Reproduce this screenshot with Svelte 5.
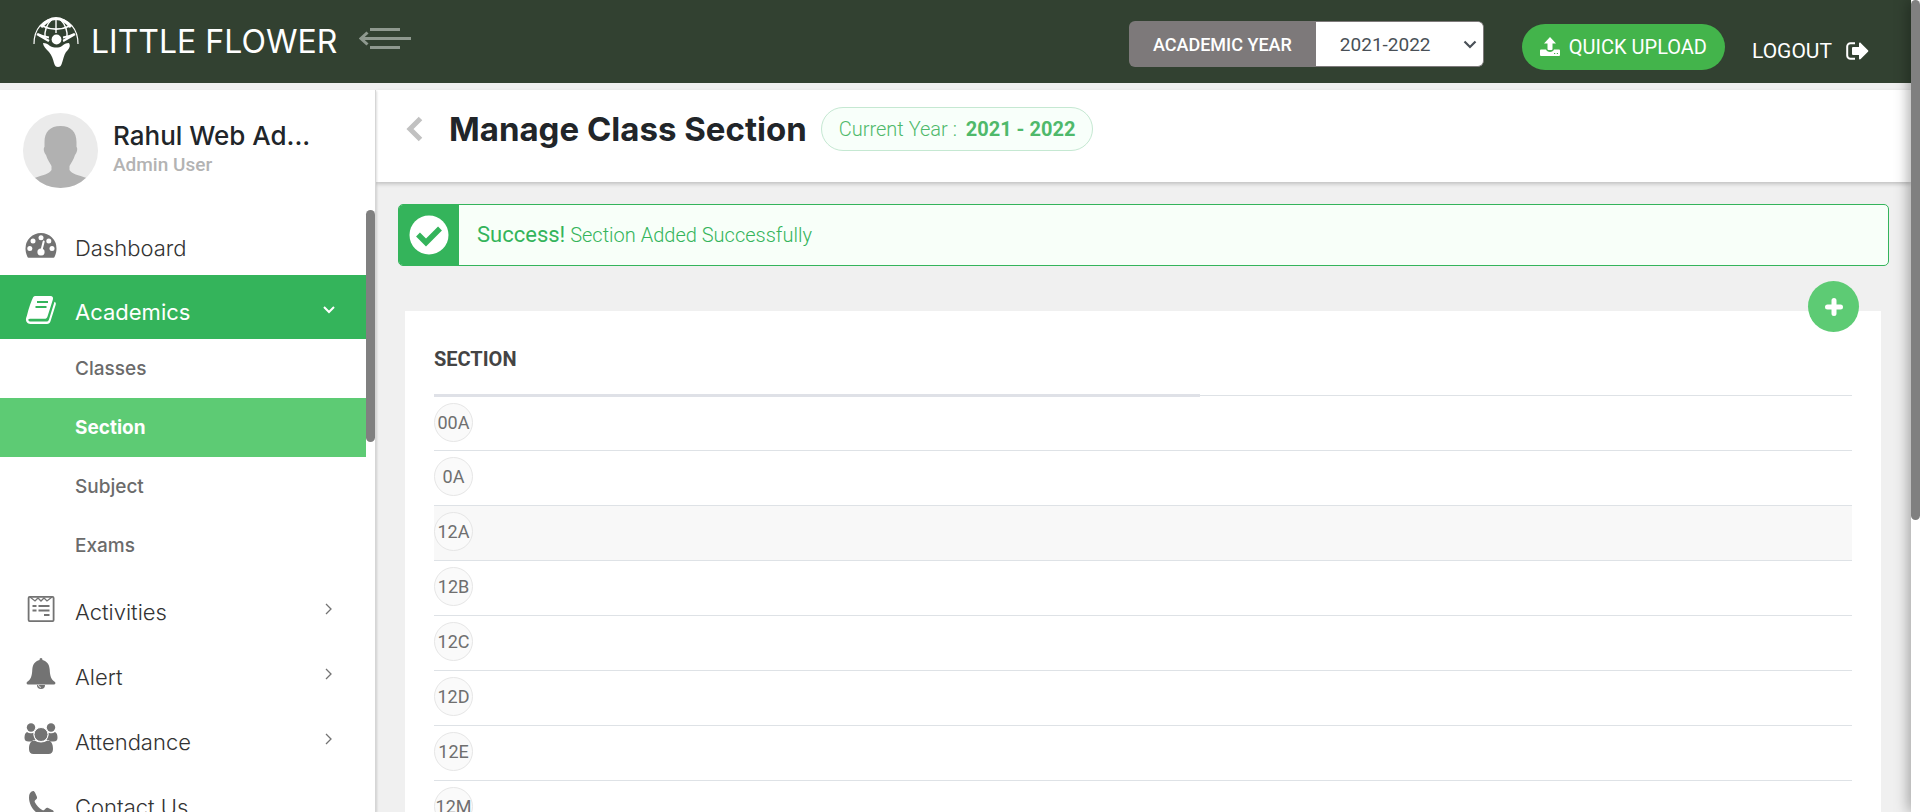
<script>
  const sections = ['00A', '0A', '12A', '12B', '12C', '12D', '12E', '12M'];
  const hovered = '12A';
  const academics = ['Classes', 'Section', 'Subject', 'Exams'];
  let year = $state('2021-2022');
</script>

{#snippet angle()}
  <svg class="angle" width="8" height="12" viewBox="0 0 8 12" aria-hidden="true">
    <path d="M1 1l5 5-5 5" fill="none" stroke="currentColor" stroke-width="1.3" />
  </svg>
{/snippet}

<div class="app">
  <div class="page">
    <header class="topbar">
      <a class="brand" href="#home">
        <svg width="46" height="50" viewBox="0 0 46 50" aria-hidden="true">
          <g fill="none" stroke="#fff">
            <path d="M1 27C1 12 10 1.500 23 1.500S45 12 45 27" stroke-width="1.200" />
            <path d="M8 10C14 3 19 1.500 23 1.500S32 3 38 10" stroke-width="3" />
            <path d="M9 9c9 4 19 4 28 0M5 17c4 2 7 3 11 3.500M41 17c-4 2-7 3-11 3.500" stroke-width="1.800" />
            <path d="M23 2v14M19 2c-5 5-8 12-7 20M27 2c5 5 8 12 7 20" stroke-width="1.400" />
            <path d="M4 17l12 7M42 17l-12 7" stroke-width="2.500" />
          </g>
          <circle cx="23.500" cy="22.500" r="6.500" fill="#324131" />
          <circle cx="23.500" cy="22.500" r="4.900" fill="#fff" />
          <path d="M10 26c3 0 5 1 7 3 4 2 9 2 12 0 2-2 4-3 7-3 2 3 0 6-3 9-2 3-3 8-4 11-1 3-2 4-4 4s-3-1-4-4c-1-4-2-7-5-11-3-3-6-6-6-9z" fill="#fff" />
        </svg>
        <span>LITTLE FLOWER</span>
      </a>
      <button class="toggle" aria-label="Toggle menu">
        <svg width="52" height="22" viewBox="0 0 52 22" aria-hidden="true">
          <path d="M11 1.500h30M2 10.500h50M11 19.500h30" stroke="currentColor" stroke-width="3" />
          <path d="M8.500 4.500L2 10.500l6.500 6" fill="none" stroke="currentColor" stroke-width="3" />
        </svg>
      </button>
      <div class="year">
        <label for="year">ACADEMIC YEAR</label>
        <div class="pick">
          <select id="year" bind:value={year}>
            <option>2021-2022</option>
            <option>2020-2021</option>
          </select>
          <svg width="14" height="9" viewBox="0 0 14 9" aria-hidden="true">
            <path d="M1.500 1.500L7 7l5.500-5.500" fill="none" stroke="#495057" stroke-width="2.200" />
          </svg>
        </div>
      </div>
      <button class="upload">
        <svg width="20" height="19" viewBox="0 0 20 19" aria-hidden="true">
          <path fill="#fff" fill-rule="evenodd" d="M10 0l6 6.500h-3.500V12a1 1 0 0 1-1 1h-3a1 1 0 0 1-1-1V6.500H4zM1 12.500h5c.6 1.600 2 2.500 4 2.500s3.400-.9 4-2.500h5a1 1 0 0 1 1 1V18a1 1 0 0 1-1 1H1a1 1 0 0 1-1-1v-4.500a1 1 0 0 1 1-1zM14 16v1h1.200v-1zm2.800 0v1H18v-1z" />
        </svg>
        QUICK UPLOAD
      </button>
      <a class="logout" href="#logout">
        LOGOUT
        <svg width="23" height="18" viewBox="0 0 23 18" aria-hidden="true">
          <path d="M9 1.200H4.500A3.300 3.300 0 0 0 1.200 4.500v9a3.300 3.300 0 0 0 3.300 3.300H9" fill="none" stroke="#fff" stroke-width="2" />
          <path d="M7 5h6V1.500c0-1 1-1.300 1.700-.6L22 8.200a1 1 0 0 1 0 1.500l-7.300 7.400c-.7.700-1.700.4-1.700-.6V13H7a1 1 0 0 1-1-1V6a1 1 0 0 1 1-1z" fill="#fff" />
        </svg>
      </a>
    </header>

    <div class="body">
      <aside>
        <div class="profile">
          <svg width="75" height="75" viewBox="0 0 75 75" aria-hidden="true">
            <clipPath id="face"><circle cx="37.500" cy="37.500" r="37.500" /></clipPath>
            <g clip-path="url(#face)">
              <path d="M0 0h75v75H0z" fill="#ebebeb" />
              <path d="M37.500 13C27 13 21.500 19 21.500 29v5c-1.500 1-.5 6 1.500 8 1.500 5 4 8 5.500 11v4c-2 4-9 5-17 8v10h52V65c-8-3-15-4-17-8v-4c1.500-3 4-6 5.500-11 2-2 3-7 1.500-8v-5c0-10-5.500-16-16-16z" fill="#b1b1b1" />
            </g>
          </svg>
          <div>
            <strong>Rahul Web Ad...</strong>
            <small>Admin User</small>
          </div>
        </div>
        <div class="scroll">
          <nav>
            <a class="item" href="#dashboard">
              <svg width="32" height="26" viewBox="0 0 32 26" aria-hidden="true">
                <path d="M16 0a15.500 15.500 0 0 0-15.500 15.500c0 3.200.9 6 2 8.500.2.500.5.700 1 .700h25c.5 0 .8-.2 1-.7 1.200-2.500 2-5.300 2-8.500A15.500 15.500 0 0 0 16 0z" fill="currentColor" />
                <g fill="#fff">
                  <circle cx="4.800" cy="15.500" r="2.500" /><circle cx="8" cy="8" r="2.500" /><circle cx="16" cy="4.800" r="2.500" />
                  <circle cx="23.800" cy="8" r="2.500" /><circle cx="27" cy="15.500" r="2.500" /><circle cx="16" cy="19" r="3.600" />
                </g>
                <path d="M16.300 18l2.400-9.500" stroke="#fff" stroke-width="2" stroke-linecap="round" />
              </svg>
              <span>Dashboard</span>
            </a>
            <a class="item open" href="#academics">
              <svg width="32" height="28" viewBox="0 0 32 28" aria-hidden="true">
                <path d="M11 0h14.500c2 0 3 1.500 2.400 3.500L22.500 20.500c-.5 1.600-1.500 2.300-3 2.300H5c-1.500 0-2 .8-1.500 1.700.4.800 1 1 2 1h16c1.200 0 2-.7 2.400-1.800l5.600-18c1.300.6 1.600 1.700 1.200 3l-5.200 16.500c-.6 1.800-1.700 2.700-3.500 2.700H5.500C2.500 28 .5 25.500 1 22.500 2 20 3.500 13 5 9c1-3 2-5 3-7.500C8.700.3 9.600 0 11 0z" fill="#fff" />
                <path d="M12 6h11M10.500 11h11" stroke="#34b45b" stroke-width="1.800" />
              </svg>
              <span>Academics</span>
              <svg class="angle" width="12" height="8" viewBox="0 0 12 8" aria-hidden="true">
                <path d="M1 1l5 5 5-5" fill="none" stroke="#fff" stroke-width="2" />
              </svg>
            </a>
            <div class="sub">
              {#each academics as entry}
                <a href="#{entry}" class:active={entry === 'Section'}>{entry}</a>
              {/each}
            </div>
            <a class="item" href="#activities">
              <svg width="32" height="26" viewBox="0 0 32 26" aria-hidden="true">
                <g fill="none" stroke="currentColor">
                  <rect x="3.600" y=".9" width="25" height="24.200" rx="1" stroke-width="1.800" />
                  <path d="M5 1l5 4 3-3 3 3 3-3 3 3 5-4" stroke-width="1.300" />
                  <path d="M7.500 10h4M13.500 10h11M7.500 14.500h4M13.500 14.500h11M19 19h5.500" stroke-width="2" />
                </g>
              </svg>
              <span>Activities</span>
              {@render angle()}
            </a>
            <a class="item" href="#alert">
              <svg width="32" height="31" viewBox="0 0 32 31" aria-hidden="true">
                <path d="M16 0c1 0 1.600.8 1.400 2 4.500 1 7 4.500 7.300 9.500.3 7 1.500 10 5.300 12.500.8 1 .3 2.500-1 2.500H3c-1.300 0-1.800-1.500-1-2.500C5.800 21.500 7 18.500 7.300 11.500 7.600 6.500 10 3 14.600 2 14.400.8 15 0 16 0z" fill="currentColor" />
                <path d="M12 27h8a4 4 0 0 1-8 0z" fill="currentColor" />
                <path d="M13.500 27c.2 1.600 1.200 2.300 2.500 2.300" fill="none" stroke="#fff" stroke-width=".8" />
              </svg>
              <span>Alert</span>
              {@render angle()}
            </a>
            <a class="item" href="#attendance">
              <svg width="34" height="31" viewBox="0 0 34 31" aria-hidden="true">
                <g fill="currentColor">
                  <path d="M3 9c2 1.500 4 1.500 6.500.7 0 3 .5 5 2 7-2 .2-3 .8-4 1.800H4.500C2 18.500.5 17.500.5 15c0-3 .5-5 2.500-6zM31 9c-2 1.500-4 1.500-6.500.7 0 3-.5 5-2 7 2 .2 3 .8 4 1.800h3c2.500 0 4-1 4-3.500 0-3-.5-5-2.500-6z" />
                  <path d="M10.500 17.500c4 2.500 9 2.500 13 0 3.500 0 5.500 3 5.500 8.500 0 3.200-1.700 5-4.500 5h-15C6.700 31 5 29.200 5 26c0-5.500 2-8.500 5.500-8.500z" />
                  <circle cx="7" cy="4.500" r="4.200" /><circle cx="27" cy="4.500" r="4.200" />
                </g>
                <circle cx="17" cy="11.500" r="7" fill="currentColor" stroke="#fff" stroke-width="1" />
              </svg>
              <span>Attendance</span>
              {@render angle()}
            </a>
            <a class="item" href="#contact">
              <svg width="32" height="26" viewBox="0 0 32 26" aria-hidden="true">
                <path d="M8 0c1 0 1.500.5 2 1.600l1.800 4c.5 1.200.2 2-.8 2.900-1.500 1.300-1.600 1.800-1 3 1.800 3.400 4 5.600 7.200 7.400 1.200.7 1.800.6 3-.8 1-1.200 1.800-1.500 3-1l4 1.900c1.300.6 1.600 1.200 1.400 2.500-.5 3.100-2.600 4.500-5.600 4.500C13 26 4 16.500 4 6.500 4 3 5.200.5 8 0z" fill="currentColor" />
              </svg>
              <span>Contact Us</span>
            </a>
          </nav>
          <div class="track"><div class="thumb side"></div></div>
        </div>
      </aside>

      <main>
        <div class="heading">
          <a class="back" href="#back" aria-label="Back">
            <svg width="17" height="26" viewBox="0 0 17 26" aria-hidden="true">
              <path d="M14.500 2.500L4 13l10.500 10.500" fill="none" stroke="#c1c1c1" stroke-width="5" />
            </svg>
          </a>
          <h1>Manage Class Section</h1>
          <div class="badge">Current Year : <b>2021 - 2022</b></div>
        </div>
        <div class="content">
          <div class="notice" role="status">
            <div class="mark">
              <svg width="40" height="40" viewBox="0 0 40 40" aria-hidden="true">
                <circle cx="20" cy="20" r="19.500" fill="#fff" />
                <path d="M9 19.500l8 8 14-14" fill="none" stroke="#34b45b" stroke-width="5.500" />
              </svg>
            </div>
            <p><span>Success!</span> Section Added Successfully</p>
          </div>
          <section class="panel">
            <button class="add" aria-label="Add section">
              <svg width="18" height="18" viewBox="0 0 18 18" aria-hidden="true">
                <path d="M9 2.500v13M2.500 9h13" stroke="#fff" stroke-width="5" stroke-linecap="round" />
              </svg>
            </button>
            <table>
              <thead>
                <tr><th>SECTION</th><td></td></tr>
              </thead>
              <tbody>
                {#each sections as name}
                  <tr class:hover={name === hovered}>
                    <td><span class="chip">{name}</span></td>
                    <td></td>
                  </tr>
                {/each}
              </tbody>
            </table>
          </section>
        </div>
      </main>
    </div>
  </div>
  <div class="track outer"><div class="thumb full"></div></div>
</div>

<style>
  :global(body) { margin: 0; }
  .app {
    display: flex;
    height: 100vh;
    overflow: hidden;
    font-family: Roboto, "Liberation Sans", sans-serif;
    background: #f0f0f0;
    color: #212529;
  }
  .app * { box-sizing: border-box; }
  a { text-decoration: none; color: inherit; }
  button { border: 0; padding: 0; font: inherit; cursor: pointer; }
  svg { display: block; flex: none; }
  .page { flex: 1; min-width: 0; display: flex; flex-direction: column; gap: 7px; }

  .topbar {
    flex: none;
    display: flex;
    align-items: center;
    height: 83px;
    padding: 0 42px 0 33px;
    background: #324131;
    color: #fff;
  }
  .brand { display: flex; align-items: center; gap: 12px; font: 400 32px Inter, sans-serif; }
  .toggle { margin: 0 auto 6px 22px; background: none; color: #8f998f; }
  .year { display: flex; height: 46px; border-radius: 6px; overflow: hidden; margin: 5px 38px 0 0; }
  .year label {
    display: flex;
    align-items: center;
    padding: 0 24px;
    background: #7d797a;
    font-weight: 500;
    font-size: 18px;
  }
  .pick { position: relative; }
  .pick svg { position: absolute; right: 7px; top: 19px; pointer-events: none; }
  select {
    appearance: none;
    width: 168px;
    height: 46px;
    padding: 0 24px;
    border: 1px solid #7d797a;
    border-left: 0;
    border-radius: 0 6px 6px 0;
    background: #fff;
    color: #495057;
    font: 400 19px Roboto, sans-serif;
  }
  .upload {
    display: flex;
    align-items: center;
    gap: 9px;
    height: 46px;
    padding: 0 18px;
    margin-top: 10px;
    border-radius: 23px;
    background: #43b44b;
    color: #fff;
    font-size: 20px;
  }
  .logout { display: flex; align-items: center; gap: 14px; margin: 18px 0 0 27px; font-size: 21px; }

  .body { flex: 1; min-height: 0; display: flex; }
  aside {
    flex: none;
    width: 376px;
    display: flex;
    flex-direction: column;
    background: #fff;
    border-right: 1px solid #d6d6d6;
    box-shadow: 1px 1px 2px #0002;
    z-index: 1;
  }
  .profile { flex: none; display: flex; gap: 15px; height: 120px; padding: 23px 0 0 23px; }
  .profile strong { display: block; margin-top: 7px; font: 500 26px/32px Inter, sans-serif; }
  .profile small { display: block; font-weight: 500; font-size: 19px; line-height: 26px; color: #b3b3b3; }
  .scroll { flex: 1; min-height: 0; display: flex; overflow: hidden; }
  nav { flex: 1; padding-top: 1px; font-family: Inter, sans-serif; }
  .item { display: flex; align-items: center; height: 64px; padding: 0 31px 0 24px; color: #737373; }
  .sub ~ .item { height: 65px; }
  .sub ~ .item > svg:first-child, .sub ~ .item .angle { margin-top: 2px; }
  .item > svg:first-child { width: 34px; margin-top: 6px; }
  .item span { flex: 1; margin: 10px 0 0 17px; font-weight: 300; font-size: 22px; line-height: 26px; color: #333; }
  .sub ~ .item span { margin-top: 8px; }
  .item .angle { width: 12px; margin-top: 6px; }
  .item.open { background: #34b45b; }
  .item.open span { font-weight: 400; color: #fff; }
  .sub { display: flex; flex-direction: column; }
  .sub a { height: 59px; padding-left: 75px; font-weight: 500; font-size: 19px; line-height: 59px; color: #6b6b6b; }
  .sub a.active { background: #5dcb74; color: #fff; font-weight: 700; }

  .track { flex: none; width: 9px; background: #fff; }
  .outer { z-index: 2; box-shadow: 0 0 15px #0008; }
  .thumb { border-radius: 5px; background: #808080; }
  .side { height: 232px; }
  .full { height: 64vh; }

  main { flex: 1; min-width: 0; }
  .heading {
    display: flex;
    align-items: center;
    height: 92px;
    padding: 0 30px 14px;
    background: #fff;
    box-shadow: 0 2px 4px #0003;
  }
  h1 { margin: 0 14px 0 26px; font: 700 33px/40px Inter, sans-serif; }
  .badge {
    height: 44px;
    padding: 0 17px;
    border: 1px solid #c5e8d2;
    border-radius: 22px;
    background: #f8fffa;
    color: #4fb96b;
    font-weight: 300;
    font-size: 20px;
    line-height: 42px;
  }
  .badge b { margin-left: 4px; font-weight: 700; }
  .content { padding: 22px 22px 0; }
  .notice {
    display: flex;
    height: 62px;
    border: 1px solid #34b45b;
    border-radius: 5px;
    background: #f8fff9;
    overflow: hidden;
  }
  .mark { display: grid; place-items: center; width: 60px; background: #34b45b; }
  .notice p { margin: 0; padding-left: 18px; font-weight: 300; font-size: 20px; line-height: 60px; color: #34b45b; }
  .notice p span { font-weight: 400; font-size: 22px; }
  .panel { position: relative; margin: 45px 8px 0 7px; padding: 0 29px; background: #fff; }
  .add {
    position: absolute;
    right: 22px;
    top: -30px;
    display: grid;
    place-items: center;
    width: 51px;
    height: 51px;
    border-radius: 50%;
    background: #5dcb74;
  }
  table { width: 100%; border-collapse: collapse; }
  th, td { padding: 0; text-align: left; border-bottom: 1px solid #dee2e6; }
  th { width: 54%; height: 84px; padding-top: 13px; border-bottom: 3px solid #dfe1e7; font-weight: 700; font-size: 20px; color: #444; }
  tbody td { height: 55px; padding-bottom: 2px; }
  .hover { background: #f8f8f8; }
  .chip {
    display: flex;
    align-items: center;
    justify-content: center;
    width: 39px;
    height: 39px;
    border: 1px solid #e6e6e6;
    border-radius: 50%;
    background: #fafafa;
    color: #6f6f6f;
    font-size: 18px;
  }
</style>
